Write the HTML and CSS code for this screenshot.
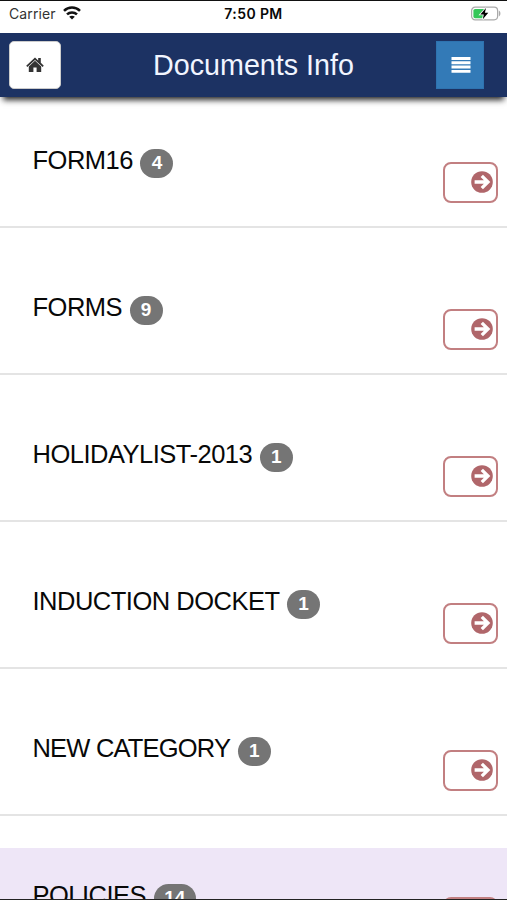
FILE: index.html
```html
<!DOCTYPE html>
<html lang="en">
<head>
<meta charset="utf-8">
<title>Documents Info</title>
<link rel="stylesheet" href="styles.css">
</head>
<body>
<svg class="defs" aria-hidden="true">
  <symbol id="arrow" viewBox="0 0 22 22">
    <circle cx="11" cy="11" r="10.8" fill="#b0666a"/>
    <path d="M3.6 11H17M10.8 4.8L17 11L10.8 17.2" fill="none" stroke="#fff" stroke-width="3.3"/>
  </symbol>
</svg>
<div class="screen">
  <div class="status">
    <div class="carrier"><span>Carrier</span>
      <svg width="18" height="14" viewBox="0 0 18 14" fill="none" stroke="#111" stroke-width="2.5"><path d="M1 4.9C5.4.5 12.6.5 17 4.9M4 8.4C6.8 5.7 11.2 5.7 14 8.4"/><path d="M9 13.6L6.2 10.8C7.8 9.3 10.2 9.3 11.8 10.8Z" fill="#111" stroke="none"/></svg>
    </div>
    <div class="time">7:50 PM</div>
    <svg class="battery" width="31" height="16" viewBox="0 0 31 16"><rect x="1.6" y="1.2" width="26" height="12.6" rx="3.5" fill="#fff" stroke="#aaa" stroke-width="1.2"/><path d="M28.8 4.6v6c2.2-.8 2.2-5.2 0-6z" fill="#aaa"/><path d="M5.1 3H14.4V12.2H5.1Q3.4 12.2 3.4 10.6V4.6Q3.4 3 5.1 3Z" fill="#35c759"/><path d="M16 2L10.3 8.4H13.8L12.8 13.2L18.3 6.8H14.9Z" fill="#000" stroke="#fff" stroke-width="1.6" paint-order="stroke"/></svg>
  </div>
  <header class="bar">
    <button class="home" aria-label="Home"><svg width="18" height="16" viewBox="0 0 18 16" fill="#333"><path d="M9 .6L12.2 3.5V1H14.8V5.8L17.8 8.7L16.6 9.9L9 3L1.4 9.9L.2 8.7Z"/><path d="M9 3.8L15.2 9.5V15H10.6V10.5H7.4V15H2.8V9.5Z"/></svg></button>
    <h1>Documents Info</h1>
    <button class="menu" aria-label="Menu"><svg width="20" height="16" viewBox="0 0 20 16" fill="#fff"><path d="M.5 0h19v2.9H.5zM.5 4.3h19v2.9H.5zM.5 8.6h19v2.9H.5zM.5 12.9h19v2.9H.5z"/></svg></button>
  </header>
  <main class="list">
    <div class="row"><div class="label"><span class="name">FORM16</span><span class="badge">4</span></div><button class="go" aria-label="Open"><svg width="22" height="22"><use href="#arrow"/></svg></button></div>
    <div class="row"><div class="label"><span class="name">FORMS</span><span class="badge">9</span></div><button class="go" aria-label="Open"><svg width="22" height="22"><use href="#arrow"/></svg></button></div>
    <div class="row"><div class="label"><span class="name">HOLIDAYLIST-2013</span><span class="badge">1</span></div><button class="go" aria-label="Open"><svg width="22" height="22"><use href="#arrow"/></svg></button></div>
    <div class="row"><div class="label"><span class="name">INDUCTION DOCKET</span><span class="badge">1</span></div><button class="go" aria-label="Open"><svg width="22" height="22"><use href="#arrow"/></svg></button></div>
    <div class="row"><div class="label"><span class="name tight">NEW CATEGORY</span><span class="badge">1</span></div><button class="go" aria-label="Open"><svg width="22" height="22"><use href="#arrow"/></svg></button></div>
    <div class="row active"><div class="label"><span class="name">POLICIES</span><span class="badge">14</span></div><button class="go" aria-label="Open"><svg width="22" height="22"><use href="#arrow"/></svg></button></div>
  </main>
</div>
</body>
</html>
```
FILE: styles.css
```css
* { box-sizing: border-box; }
body { margin: 0; background: #fff; font-family: "Liberation Sans", Arial, sans-serif; color: #080808; }
button { padding: 0; margin: 0; font: inherit; }
.defs { display: none; }
.screen {
  display: flex; flex-direction: column;
  height: 900px; overflow: hidden;
  border-top: 1px solid #111; border-bottom: 1px solid #222;
}
.status {
  flex: none; height: 32px; padding: 0 6px 7px 9px;
  display: grid; grid-template-columns: 1fr auto 1fr; align-items: center;
  font-family: Inter, sans-serif; font-size: 14px;
}
.carrier { display: flex; align-items: center; gap: 7px; color: #333; }
.carrier span { letter-spacing: .12px; }
.carrier svg { margin-top: -2px; }
.time { margin-right: 3px; font-size: 14px; font-weight: 600; letter-spacing: .4px; }
.battery { justify-self: end; }
.bar {
  flex: none; height: 63.5px; padding: 0 23px 0 8.5px;
  display: grid; grid-template-columns: 52.5px 1fr 48px; align-items: center;
  background: #1c3263; box-shadow: 0 6px 6px -3px rgba(0, 0, 0, .85);
}
.bar h1 {
  margin: 0 0 0 10px; text-align: center; white-space: nowrap;
  font-size: 28.7px; line-height: 34px; font-weight: 400; color: #f1f5ff;
}
.home, .menu { display: flex; align-items: center; justify-content: center; height: 48px; }
.home { background: #fff; border: 1px solid #ccc; border-radius: 5px; }
.menu { background: #337ab7; border: 1px solid #2e73b0; padding-left: 2px; }
.list { flex: 1; min-height: 0; padding-top: 16px; display: flex; flex-direction: column; gap: 32px; }
.row {
  flex: none; height: 115px; padding: 0 9px 0 32.5px;
  display: flex; justify-content: space-between; align-items: flex-start;
  border-bottom: 2px solid #e4e4e4;
}
.active { background: #eee6f7; }
.label { display: flex; align-items: flex-start; gap: 7.5px; padding-top: 32px; }
.name { font-size: 25.5px; line-height: 30px; letter-spacing: -.5px; white-space: nowrap; }
.tight { letter-spacing: -.8px; }
.badge {
  margin-top: 4px; min-width: 33px; height: 29px; padding: 0 10.5px; border-radius: 15px;
  background: #757575; color: #fff; font-size: 19px; line-height: 28px; font-weight: 700; text-align: center;
}
.go {
  margin-top: 49px; width: 55px; height: 41px; padding-right: 3.5px;
  display: flex; align-items: center; justify-content: flex-end;
  background: #fff; border: 2px solid #c27f81; border-radius: 8px;
}
```
